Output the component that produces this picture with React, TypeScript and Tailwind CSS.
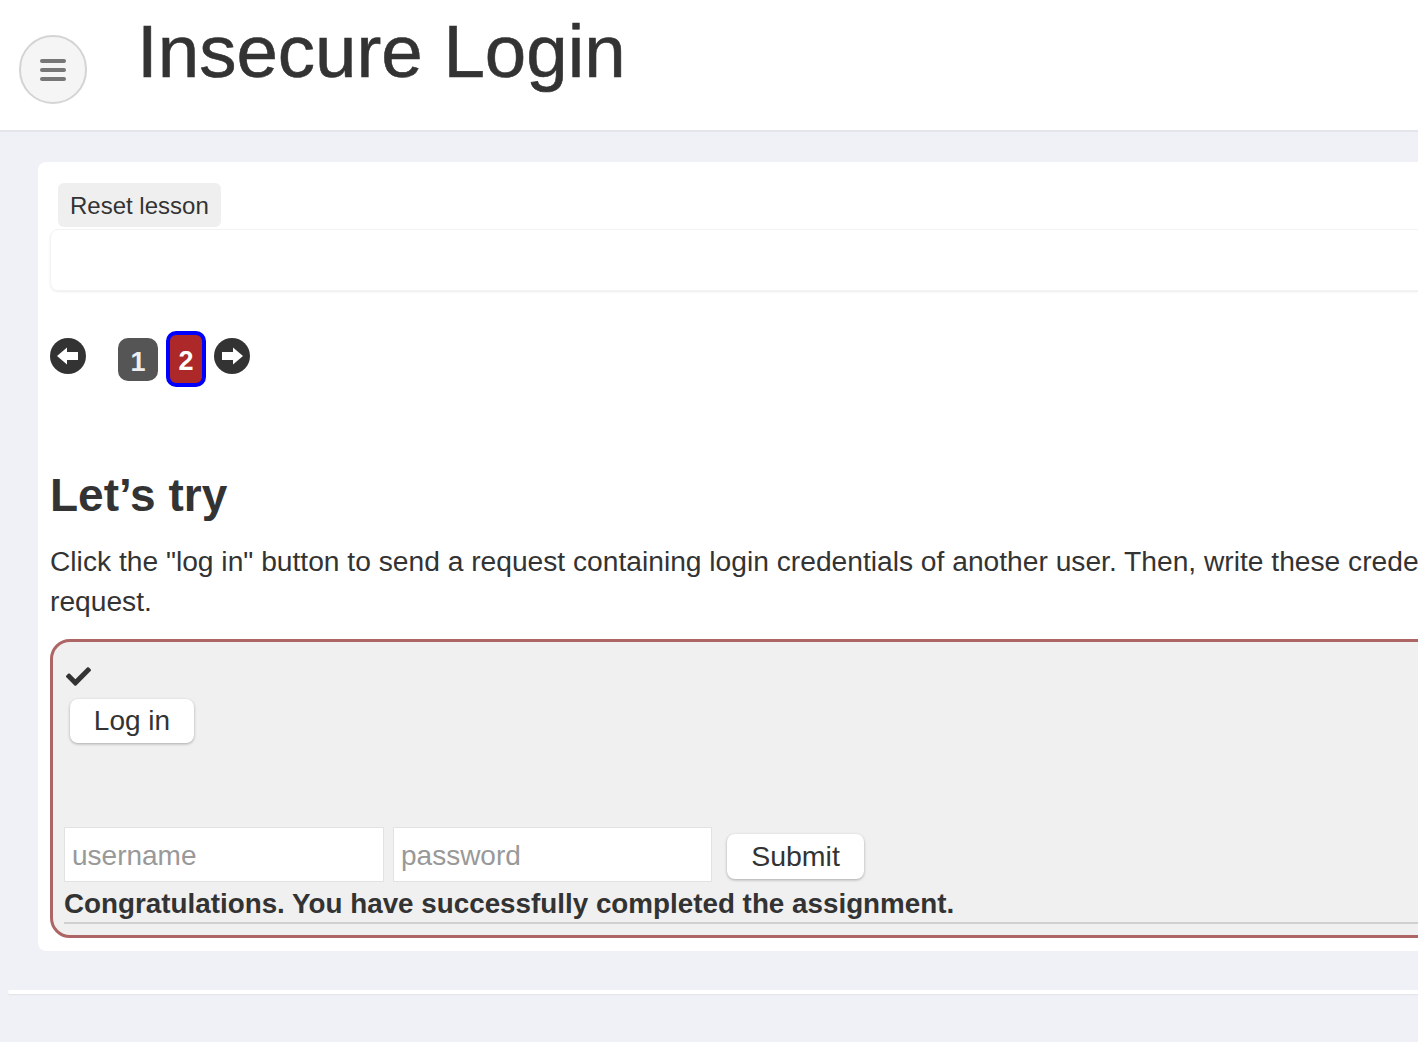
import { FaCheck } from "react-icons/fa";

const font = { fontFamily: '"Liberation Sans", Arial, Helvetica, sans-serif' };

function ArrowCircle({ dir }: { dir: "left" | "right" }) {
  return (
    <svg width="36" height="36" viewBox="0 0 36 36" className={dir === "right" ? "mt-[7px] ml-[8px] -scale-x-100" : "mt-[7px]"}>
      <circle cx="18" cy="18" r="18" fill="#333" />
      <path d="M7 18 L17 9.5 L17 14 L28 14 L28 22 L17 22 L17 26.5 Z" fill="#fff" />
    </svg>
  );
}

function Pagination() {
  return (
    <div className="mt-[40px] flex items-start">
      <ArrowCircle dir="left" />
      <div className="ml-[32px] mt-[7px] flex h-[43px] w-[40px] items-center justify-center rounded-[10px] bg-[#555] pt-[5px] text-[27px] font-bold text-[#eee]">
        1
      </div>
      <div className="ml-[8px] flex h-[56px] w-[40px] items-center justify-center rounded-[10px] border-4 border-[#0000ff] bg-[#ad2828] pt-[5px] text-[27px] font-bold text-white">
        2
      </div>
      <ArrowCircle dir="right" />
    </div>
  );
}

function AttackBox() {
  return (
    <div className="mt-[18px] h-[299px] rounded-[20px] border-[3px] border-[#ad6565] bg-[#f0f0f0] px-[11px] pt-[22px]">
      <FaCheck className="ml-[2px] text-[#333]" size={25} />
      <button
        type="button"
        className="ml-[6px] mt-[10px] block h-[44px] w-[124px] rounded-[8px] bg-white text-[28px] text-[#333] shadow-[0_1px_3px_rgba(0,0,0,0.3)]"
      >
        Log in
      </button>
      <div className="mt-[84px] flex items-center">
        <input
          type="text"
          placeholder="username"
          className="h-[55px] w-[320px] border border-[#e2e2e2] bg-white px-[7px] pt-[3px] text-[28px] text-[#333] placeholder:text-[#999] outline-none"
          style={font}
        />
        <input
          type="password"
          placeholder="password"
          className="ml-[9px] h-[55px] w-[319px] border border-[#e2e2e2] bg-white px-[7px] pt-[3px] text-[28px] text-[#333] placeholder:text-[#999] outline-none"
          style={font}
        />
        <button
          type="button"
          className="ml-[15px] mt-[4px] h-[45px] w-[137px] rounded-[8px] bg-white text-[28.5px] text-[#333] shadow-[0_1px_3px_rgba(0,0,0,0.3)]"
        >
          Submit
        </button>
      </div>
      <div className="mt-[6px] text-[27.8px] font-bold leading-[32px] text-[#333]">
        Congratulations. You have successfully completed the assignment.
      </div>
      <div className="mt-[2px] h-[2px] bg-[#d0d0d0]" />
    </div>
  );
}

export default function App() {
  return (
    <div className="min-h-[1042px] w-[1418px] overflow-hidden bg-[#f0f1f6] text-[#333]" style={font}>
      <div className="flex h-[132px] w-[1900px] items-start border-b-2 border-[#e4e5ea] bg-white">
        <button
          type="button"
          className="ml-[19px] mt-[35px] flex h-[69px] w-[68px] flex-col items-center justify-center gap-[5px] rounded-full border-2 border-[#d4d4d4] bg-[#f5f5f5]"
        >
          <span className="block h-[4px] w-[26px] rounded-sm bg-[#777]" />
          <span className="block h-[4px] w-[26px] rounded-sm bg-[#777]" />
          <span className="block h-[4px] w-[26px] rounded-sm bg-[#777]" />
        </button>
        <h1 className="ml-[50px] mt-[15px] text-[74.5px] leading-[74px] text-[#333] [-webkit-text-stroke:0.6px_#333]">
          Insecure Login
        </h1>
      </div>

      <div className="ml-[38px] mt-[30px] w-[1800px] rounded-[8px] bg-white px-[12px] pb-[13px] pt-[21px]">
        <button
          type="button"
          className="ml-[8px] block h-[44px] rounded-[6px] bg-[#efefef] px-[12px] pt-[2px] text-[24px] text-[#333]"
        >
          Reset lesson
        </button>
        <div className="mt-[2px] h-[62px] rounded-[8px] border border-[#f3f3f3] shadow-[0_1px_2px_rgba(0,0,0,0.08)]" />

        <Pagination />

        <h2 className="mt-[82px] text-[46px] font-bold leading-[52px] text-[#333]">Let’s try</h2>
        <p className="mt-[20px] text-[28.2px] leading-[40px] text-[#333]">
          <span className="whitespace-nowrap">
            Click the "log in" button to send a request containing login credentials of another user. Then, write
            these credentials into the appropriate fields and submit to confirm. Try using a packet sniffer to
            intercept the
          </span>
          <br />
          request.
        </p>

        <AttackBox />
      </div>

      <div className="ml-[8px] mt-[39px] h-[4px] w-[1500px] rounded-sm bg-white shadow-[0_1px_2px_rgba(0,0,0,0.06)]" />
    </div>
  );
}
